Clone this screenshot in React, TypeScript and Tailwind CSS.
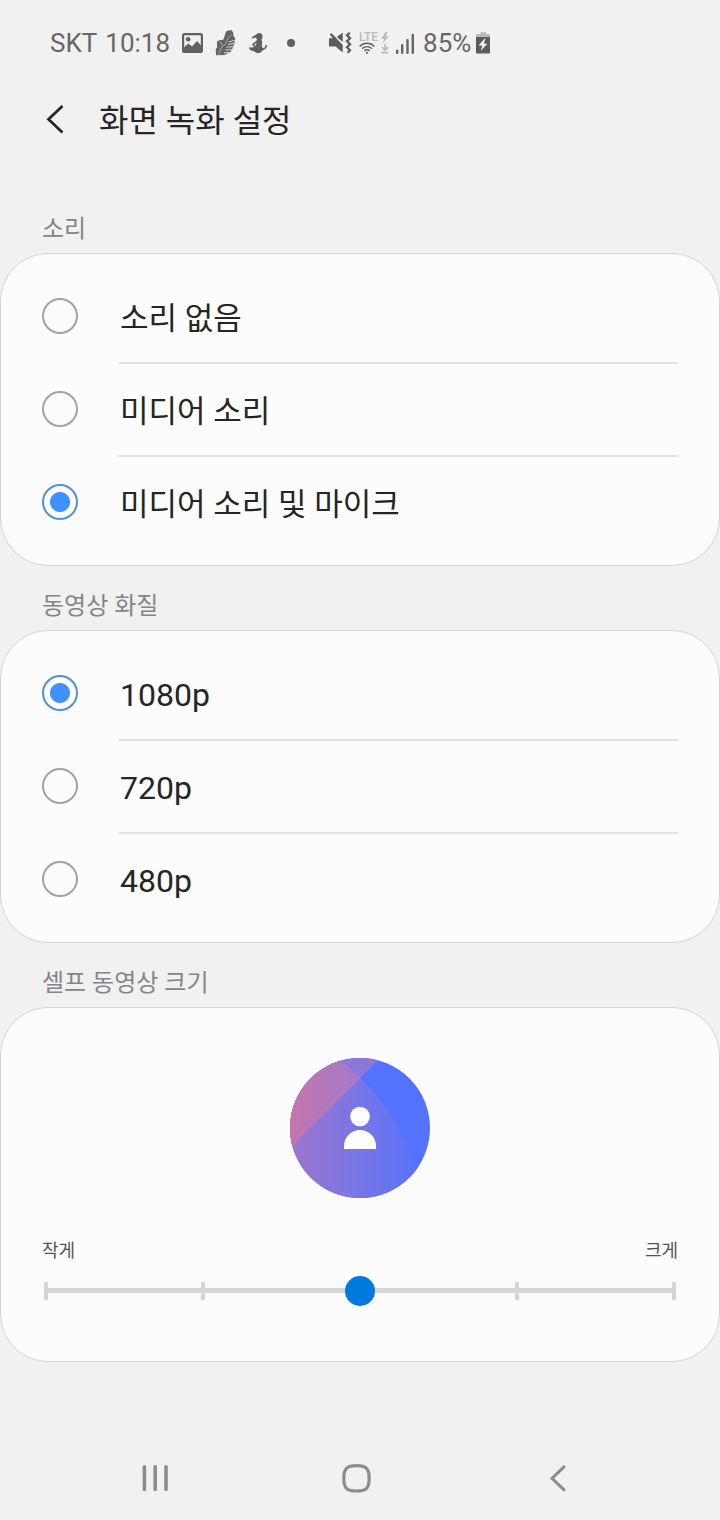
import { useState } from "react";

const soundOptions = ["소리 없음", "미디어 소리", "미디어 소리 및 마이크"];
const qualityOptions = ["1080p", "720p", "480p"];

function StatusBar() {
	return (
		<div className="flex h-[86px] items-center pl-[50px] text-[26px] text-[#666]">
			<span className="mr-2">SKT</span>
			<span>10:18</span>
			<svg className="ml-3 h-5 w-[21px]" viewBox="0 0 21 20" fill="none">
				<rect x="1.1" y="1.1" width="18.8" height="17.8" rx="1.5" stroke="#606060" strokeWidth="2.2" />
				<circle cx="6.2" cy="6.3" r="2.3" fill="#606060" />
				<path d="M2 14.5 6.5 10.5 10 13.5 15 8 19.5 13V18H2Z" fill="#606060" />
			</svg>
			<svg className="ml-3 h-[26px] w-[21px]" viewBox="0 0 21 26">
				<path
					d="M1 25.2 0.8 19 2.2 17.3 1.9 11.5 4.2 10.3 8.2 9.7 10 5 11 1.6 13 .4 16.8.2 18.2 2.8 18.5 6 20.4 8.8 19.5 12.5 18 17.5 15.5 22 9.5 25Z"
					fill="#646464"
				/>
				<path
					d="M3.5 24.5 6 18 10.8 13.5 13 8.5 17 4.2M4.8 11.2 7.8 15.5"
					fill="none"
					stroke="#bbb"
					strokeWidth=".8"
				/>
				<path
					d="M14 12 20 10.2M13 14.5 19.5 13.4M11.5 17.2 18.5 16.7M10.5 20 17.5 19.6M9 22.8 15.5 22.4"
					fill="none"
					stroke="#d8d8d8"
					strokeWidth="1"
				/>
			</svg>
			<svg className="ml-[13px] h-5 w-[19px]" viewBox="0 0 19 20">
				<g fill="#606060">
					<ellipse cx="10.2" cy="3.6" rx="3.3" ry="3.5" />
					<path d="M7.6 1.4 4 3.2 2.2 5.4 5.6 5 7.8 4Z" />
					<path d="M8.4 6H12.2L13.2 9 12.8 13.2 14.4 16 12.8 18.6 10.6 19.9H7.6L4.8 18.2 1 16.9 0 14.6 3.2 14.5 6.2 13.6 7.4 11 7 9Z" />
				</g>
				<path
					d="M8.4 8.2 4 11.4 6.4 14M12.5 16.8C15.6 16.2 17 15 17.4 12"
					fill="none"
					stroke="#606060"
					strokeWidth="1.7"
				/>
			</svg>
			<span className="ml-[19px] size-2 rounded-full bg-[#606060]" />
			<svg className="ml-[34px] h-[22px] w-[23px]" viewBox="0 0 23 22" fill="#5c5c5c">
				<path d="M0 6.2H3.8L.8 2.7 2.4.9 13.7 13V20.6L6.6 14.4H0Z" />
				<path d="M8 5 13.7.5V10Z" />
				<path
					d="M20.8.8 18 3.2 21 6.2 18 9.2 21 12.2 18 15.2 21 18.2 18.6 20.8"
					fill="none"
					stroke="#5c5c5c"
					strokeWidth="2.3"
				/>
			</svg>
			<span className="ml-1.5 flex w-[21px] flex-col items-center">
				<span className="text-[12px] leading-[10px] font-medium text-[#bbb]">LTE</span>
				<svg className="mr-1 h-3 w-4" viewBox="0 0 16 12" fill="none" stroke="#606060" strokeWidth="1.4">
					<path d="M.6 4.4C4.6.1 11.4.1 15.4 4.4M3 6.8C5.8 3.9 10.2 3.9 13 6.8M5.3 9C6.9 7.4 9.1 7.4 10.7 9" />
					<circle cx="8" cy="10.8" r="1.1" fill="#606060" stroke="none" />
				</svg>
			</span>
			<svg className="ml-0.5 h-[22px] w-2" viewBox="0 0 8 22">
				<path d="M4.4 0 .2 6.8H3.1L1.6 11.6 7.8 4.3H4.5L6.8 0Z" fill="#bbb" />
				<path d="M4 12.2V18M1 15.2 4 18.2 7 15.2M.3 20.6H7.7" fill="none" stroke="#bbb" strokeWidth="1.7" />
			</svg>
			<svg className="ml-[7px] h-[21px] w-[19px]" viewBox="0 0 19 21" fill="#666">
				<rect x="0" y="16.5" width="2.4" height="4.5" rx="1" />
				<rect x="5" y="11" width="2.4" height="10" rx="1" />
				<rect x="10.3" y="6" width="2.4" height="15" rx="1" />
				<rect x="15.6" y=".7" width="2.4" height="20.3" rx="1" />
			</svg>
			<span className="ml-2">85%</span>
			<svg className="ml-[5px] h-[22px] w-3.5" viewBox="0 0 14 22">
				<path d="M0 5V3Q0 2 1 2H4.5V.3H10V2H13Q14 2 14 3V5Z" fill="#bbb" />
				<path d="M0 5H14V20.5Q14 21.5 13 21.5H1Q0 21.5 0 20.5Z" fill="#5c5c5c" />
				<path d="M8.8 6.5 2.5 13.5H6.3L4.8 18.8 11.3 11.8H7.8L9.5 6.5Z" fill="#f5f5f5" />
			</svg>
		</div>
	);
}

function SectionTitle({ children }: { children: string }) {
	return <h2 className="px-[42px] pt-6 pb-2 text-[24px] leading-8 text-[#858585]">{children}</h2>;
}

type RadioCardProps = {
	name: string;
	options: string[];
	value: string;
	onChange: (value: string) => void;
	textClass: string;
};

function RadioCard({ name, options, value, onChange, textClass }: RadioCardProps) {
	return (
		<div className="rounded-[48px] border border-[#d4d4d4] bg-[#fcfcfc] px-[41px] pt-[17px] pb-[15px]">
			{options.map((option, i) => (
				<label key={option} className="flex h-[93px] cursor-pointer">
					<input
						type="radio"
						name={name}
						checked={value === option}
						onChange={() => onChange(option)}
						className="mt-[27px] size-9 shrink-0 appearance-none rounded-full border-2 border-[#a3a3a3] checked:border-[#528fdf] checked:bg-[radial-gradient(circle,#3e91ff_9.5px,transparent_10.5px)]"
					/>
					<span
						className={`ml-[41px] flex flex-1 items-center border-b-2 pl-px text-[#252525] ${textClass} ${
							i < options.length - 1 ? "border-[#e2e2e2]" : "border-transparent"
						}`}
					>
						{option}
					</span>
				</label>
			))}
		</div>
	);
}

function SelfieAvatar() {
	return (
		<svg className="mx-auto size-[140px]" viewBox="0 0 140 140">
			<defs>
				<linearGradient id="pink" gradientUnits="userSpaceOnUse" x1="0" y1="0" x2="70" y2="0">
					<stop offset="0" stopColor="#c675ae" />
					<stop offset="1" stopColor="#a37bc9" />
				</linearGradient>
				<linearGradient id="purple" gradientUnits="userSpaceOnUse" x1="0" y1="0" x2="130" y2="0">
					<stop offset="0" stopColor="#9e75cc" />
					<stop offset=".5" stopColor="#7a76e4" />
					<stop offset="1" stopColor="#5673fb" />
				</linearGradient>
				<clipPath id="disc">
					<circle cx="70" cy="70" r="70" />
				</clipPath>
			</defs>
			<g clipPath="url(#disc)">
				<path d="M0 0H140V140H0Z" fill="#5272ff" />
				<path d="M0 0H90L0 90Z" fill="#8c76d9" />
				<path d="M0 140V0H47.5Q60 10 70.5 19.8Q107 55 130 118V140Z" fill="url(#purple)" />
				<path d="M0 0H47.5Q60 10 70.5 19.8L0 90Z" fill="url(#pink)" />
			</g>
			<circle cx="70" cy="58.5" r="9.8" fill="#fff" />
			<path d="M54 91V88A16 16 0 0 1 86 88V91Z" fill="#fff" />
		</svg>
	);
}

function SizeCard() {
	const [size, setSize] = useState(2);

	return (
		<div className="rounded-[48px] border border-[#d4d4d4] bg-[#fcfcfc] px-[41px] pt-[50px] pb-[55px]">
			<SelfieAvatar />
			<div className="mt-10 flex justify-between text-[18px] leading-[26px] text-[#555]">
				<span>작게</span>
				<span>크게</span>
			</div>
			<div className="relative mx-0.5 mt-[11px] flex h-[31px] items-center">
				<div className="h-[5px] w-full bg-[#d6d6d6]" />
				<div className="absolute inset-0 flex items-center justify-between">
					{[0, 1, 2, 3, 4].map((tick) => (
						<span key={tick} className="h-[18px] w-1 bg-[#d6d6d6]" />
					))}
				</div>
				<input
					type="range"
					aria-label="셀프 동영상 크기"
					min={0}
					max={4}
					value={size}
					onChange={(e) => setSize(Number(e.target.value))}
					className="absolute -inset-x-[13px] inset-y-0 cursor-pointer appearance-none bg-transparent [&::-webkit-slider-thumb]:size-[30px] [&::-webkit-slider-thumb]:appearance-none [&::-webkit-slider-thumb]:rounded-full [&::-webkit-slider-thumb]:bg-[#007ade]"
				/>
			</div>
		</div>
	);
}

function NavBar() {
	return (
		<nav className="mt-auto flex h-[84px] items-center pr-[62px] pl-[54px]">
			<button type="button" aria-label="최근 앱" className="flex flex-1 justify-center">
				<svg className="size-8" viewBox="0 0 32 32" stroke="#8c8c8c" strokeWidth="3.6" strokeLinecap="round">
					<path d="M5.4 4.8V27.4M16.2 4.8V27.4M27 4.8V27.4" />
				</svg>
			</button>
			<button type="button" aria-label="홈" className="flex flex-1 justify-center">
				<svg className="size-8" viewBox="0 0 32 32" fill="none" stroke="#8c8c8c" strokeWidth="3.2">
					<path d="M16.5 3.6C26.3 3.6 29.2 6.5 29.2 16.3S26.3 29 16.5 29 3.8 26.1 3.8 16.3 6.7 3.6 16.5 3.6Z" />
				</svg>
			</button>
			<button type="button" aria-label="뒤로" className="flex flex-1 justify-center">
				<svg
					className="size-8"
					viewBox="0 0 32 32"
					fill="none"
					stroke="#8c8c8c"
					strokeWidth="3"
					strokeLinecap="round"
				>
					<path d="M23 4.8 11 16.3 23 27.8" />
				</svg>
			</button>
		</nav>
	);
}

export default function App() {
	const [sound, setSound] = useState(soundOptions[2]);
	const [quality, setQuality] = useState(qualityOptions[0]);

	return (
		<div className="flex min-h-screen flex-col bg-[#f1f1f1] font-[Roboto,'Noto_Sans_CJK_KR',sans-serif]">
			<StatusBar />
			<header className="flex h-[68px] items-center pl-[39px]">
				<button type="button" aria-label="뒤로">
					<svg className="size-8" viewBox="0 0 32 32" fill="none" stroke="#252525" strokeWidth="2.8">
						<path d="M23.5 2 9.5 15.3 23.5 28.5" />
					</svg>
				</button>
				<h1 className="ml-7 pt-0.5 text-[32px] text-[#252525]">화면 녹화 설정</h1>
			</header>
			<main className="pt-[35px]">
				<SectionTitle>소리</SectionTitle>
				<RadioCard
					name="sound"
					options={soundOptions}
					value={sound}
					onChange={setSound}
					textClass="pt-1.5 text-[31px]"
				/>
				<SectionTitle>동영상 화질</SectionTitle>
				<RadioCard
					name="quality"
					options={qualityOptions}
					value={quality}
					onChange={setQuality}
					textClass="pt-0.5 text-[32px]"
				/>
				<SectionTitle>셀프 동영상 크기</SectionTitle>
				<SizeCard />
			</main>
			<NavBar />
		</div>
	);
}
